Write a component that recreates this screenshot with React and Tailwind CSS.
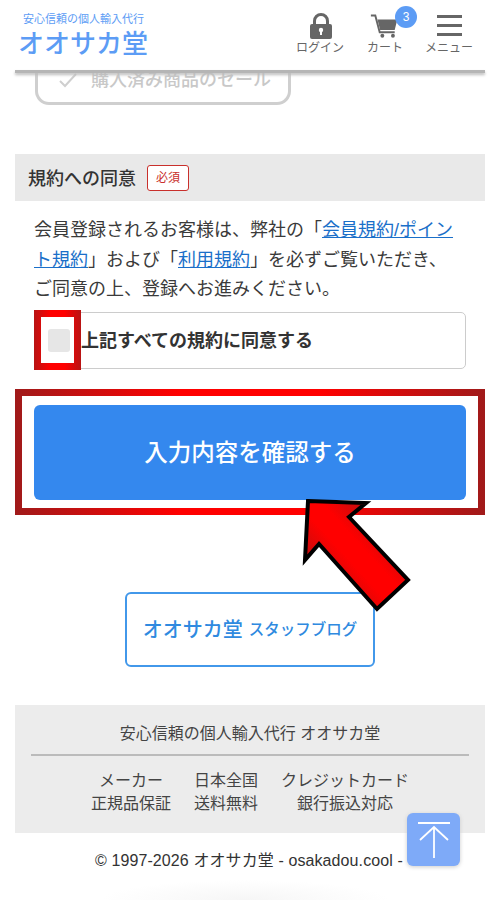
const FONT = "font-['Liberation_Sans','Noto_Sans_CJK_JP',sans-serif]";

function Header() {
  return (
    <header className="flex h-[70px] items-start justify-between bg-white pr-[27px] pl-[18px]">
      <div className="pt-[12px]">
        <div className="ml-[5px] text-[11px] leading-[14px] text-[#5c9cf5]">安心信頼の個人輸入代行</div>
        <div className="mt-[1px] text-[26px] leading-[34px] font-medium text-[#5c9cf5]">オオサカ堂</div>
      </div>
      <div className="flex items-start text-[12px] leading-[14px] text-[#666]">
        <div className="flex w-[48px] flex-col items-center pt-[13px]">
          <svg width="24" height="26" viewBox="0 0 24 26" className="ml-[2px]">
            <path d="M5.500 12V8a6.500 6.500 0 0 1 13 0v4" fill="none" stroke="#666" strokeWidth="3" />
            <rect x="1" y="11" width="22" height="15" rx="2" fill="#666" />
            <circle cx="12" cy="17" r="2.200" fill="#fff" />
            <rect x="11" y="17" width="2" height="5" fill="#fff" />
          </svg>
          <span className="mt-[2px]">ログイン</span>
        </div>
        <div className="relative ml-[21px] flex w-[40px] flex-col items-center pt-[13px]">
          <svg width="30" height="26" viewBox="0 0 34 27">
            <path d="M1 1.500h5l5 19h17" fill="none" stroke="#666" strokeWidth="2.200" />
            <path d="M8.500 6H31l-3 12H11.500z" fill="#666" />
            <circle cx="14" cy="24.500" r="2.200" fill="#666" />
            <circle cx="26" cy="24.500" r="2.200" fill="#666" />
          </svg>
          <span className="mt-[2px]">カート</span>
          <span className="absolute top-[6px] left-[30px] flex h-[22px] w-[22px] items-center justify-center rounded-full bg-[#5c9cf5] text-[12px] text-white">3</span>
        </div>
        <div className="ml-[20px] flex w-[48px] flex-col items-center pt-[15px]">
          <div className="mb-[5.500px] flex w-[25px] flex-col gap-[6.500px]">
            <div className="h-[2.500px] bg-[#666]" />
            <div className="h-[2.500px] bg-[#666]" />
            <div className="h-[2.500px] bg-[#666]" />
          </div>
          <span>メニュー</span>
        </div>
      </div>
    </header>
  );
}

function Terms() {
  return (
    <section>
      <div className="flex h-[47px] items-center bg-[#e9e9e9] pl-[13px]">
        <span className="pt-[3px] text-[18px] font-medium text-[#333]">規約への同意</span>
        <span className="ml-[11px] flex h-[26px] w-[42px] items-center justify-center rounded-[3px] border border-[#c9302c] bg-white text-[12px] text-[#c9302c]">必須</span>
      </div>
      <p className="mt-[15px] px-[19px] text-[18px] leading-[29.500px] text-[#3a3a3a]">
        会員登録されるお客様は、弊社の「<a className="text-[#1a6fc9] underline">会員規約/ポイント規約</a>」および「<a className="text-[#1a6fc9] underline">利用規約</a>」を必ずご覧いただき、<br />ご同意の上、登録へお進みください。
      </p>
      <div className="relative mt-[7px] mr-[19px] ml-[20px] flex h-[57px] items-center rounded-[5px] border border-[#ccc] pt-[2px] pl-[45px]">
        <span className="text-[18px] font-bold text-[#333]">上記すべての規約に同意する</span>
        <div className="absolute top-[-3px] left-[-2px] h-[60px] w-[47px] bg-[linear-gradient(90deg,#b81414,#ff0000_35%,#ff0000_65%,#b81414)] p-[7px]">
          <div className="h-full bg-white pt-[12px] pl-[7px]">
            <div className="h-[23px] w-[22px] rounded-[3px] bg-[#e6e6e6]" />
          </div>
        </div>
      </div>
    </section>
  );
}

export default function App() {
  return (
    <div className={`relative h-[900px] overflow-hidden bg-white ${FONT}`}>
      <div className="relative z-10">
        <Header />
        <div className="mx-[15px] h-[3px] bg-[#b5b5b5] shadow-[0_2px_3px_#bbb]" />
      </div>
      <div className="h-[81px] pl-[35px]">
        <div className="flex h-[32px] w-[256px] items-end gap-[13px] rounded-b-[14px] border-[3px] border-t-0 border-[#cfcfcf] pb-[8px] pl-[20px] text-[18px] leading-[27px] font-medium text-[#c8c8c8]">
          <svg width="20" height="16" viewBox="0 0 20 16" className="mb-[6px]"><path d="M2 9l5 5L18 2" fill="none" stroke="#cfcfcf" strokeWidth="2" /></svg>
          <span>購入済み商品のセール</span>
        </div>
      </div>
      <main className="mx-[15px]">
        <Terms />
        <div className="mt-[20px] bg-[linear-gradient(90deg,#a01a1a,#ff0000_35%,#ff0000_65%,#a01a1a)] p-[7px]">
          <div className="bg-white px-[12px] pt-[9px] pb-[8px]">
            <button type="button" className="h-[95px] w-full rounded-[6px] bg-[#3488ee] pt-[3px] text-[23.500px] font-medium text-white">入力内容を確認する</button>
          </div>
        </div>
        <div className="mt-[77px] flex justify-center">
          <div className="flex h-[75px] w-[250px] items-center justify-center rounded-[6px] border-2 border-[#4298ea] pt-[2px] text-[#2f8ae0]">
            <span className="text-[20px] font-medium">オオサカ堂</span>
            <span className="ml-[6px] text-[15.500px] font-medium">スタッフブログ</span>
          </div>
        </div>
        <footer className="mt-[38px] h-[128px] bg-[#ececec] px-[16px] text-[#444]">
          <div className="border-b-2 border-[#bbb] pt-[17px] pb-[8px] text-center text-[16px] leading-[24px]">安心信頼の個人輸入代行 オオサカ堂</div>
          <div className="mt-[13px] flex justify-center gap-[23px] text-center text-[16px] leading-[23px]">
            <div><div>メーカー</div><div>正規品保証</div></div>
            <div><div>日本全国</div><div>送料無料</div></div>
            <div><div>クレジットカード</div><div>銀行振込対応</div></div>
          </div>
        </footer>
        <div className="mt-[18px] pl-[80px] text-[16px] leading-[20px] tracking-[0.1px] whitespace-nowrap text-[#333]">© 1997-2026 オオサカ堂 - osakadou.cool -</div>
      </main>

      {/* annotation arrow over the button */}
      <svg width="120" height="120" viewBox="0 0 120 120" className="absolute top-[495px] left-[298px]">
        <defs>
          <linearGradient id="arrowFill" gradientUnits="userSpaceOnUse" x1="5" y1="68" x2="72" y2="7">
            <stop offset="0" stopColor="#b81010" />
            <stop offset="0.4" stopColor="#ff0000" />
            <stop offset="0.6" stopColor="#ff0000" />
            <stop offset="1" stopColor="#b81010" />
          </linearGradient>
        </defs>
        <path d="M10 6L68 8L51 22L110 85L79 114L21 49L7 65Z" fill="url(#arrowFill)" stroke="#000" strokeWidth="4" />
      </svg>

      <div className="absolute top-[813px] left-[407px] flex h-[53px] w-[53px] flex-col items-center rounded-[6px] bg-[#7eaaf8] shadow-[0_1px_4px_#ccc]">
        <svg width="34" height="40" viewBox="0 0 34 40" className="mt-[9px]">
          <path d="M1 1h32M17 36V5M3 18L17 5l14 13" fill="none" stroke="#fff" strokeWidth="1.800" />
        </svg>
      </div>
      <div className="absolute top-[880px] left-[100px] h-[20px] w-[290px] bg-[radial-gradient(ellipse_at_bottom,#f6f6f6,#ffffff_70%)]" />
    </div>
  );
}
